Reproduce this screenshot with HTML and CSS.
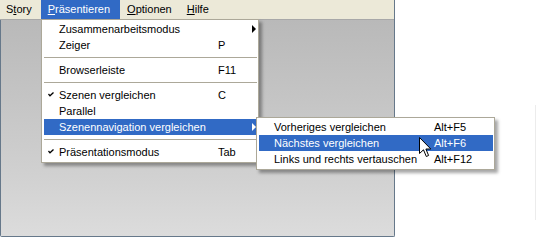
FILE: index.html
```html
<!DOCTYPE html>
<html lang="de">
  <head>
    <meta charset="UTF-8" />
    <title>Präsentieren</title>
    <link rel="stylesheet" href="styles.css">
  </head>
  <body>
    <div class="window">
      <div class="menubar">
        <span class="barItem first">S<u>t</u>ory</span>
        <span class="barItem open"><u>P</u>räsentieren</span>
        <span class="barItem"><u>O</u>ptionen</span>
        <span class="barItem"><u>H</u>ilfe</span>
      </div>
      <div class="canvas"></div>
    </div>
    <div class="edge"></div>

    <!-- main menu -->
    <div class="menu mainMenu">
      <div class="item"><span class="label">Zusammenarbeitsmodus</span><span class="arrow"></span></div>
      <div class="item"><span class="label">Zeiger</span><span class="key">P</span></div>
      <div class="sep"></div>
      <div class="item"><span class="label">Browserleiste</span><span class="key">F11</span></div>
      <div class="sep"></div>
      <div class="item"><span class="check"><svg width="6" height="5" viewBox="0 0 6 5"><path d="M0.5 2 L2 3.8 L5.5 0.5" fill="none" stroke="#000" stroke-width="1.3"/></svg></span><span class="label">Szenen vergleichen</span><span class="key">C</span></div>
      <div class="item"><span class="label">Parallel</span></div>
      <div class="item active"><span class="label">Szenennavigation vergleichen</span><span class="arrow"></span></div>
      <div class="sep"></div>
      <div class="item"><span class="check"><svg width="6" height="5" viewBox="0 0 6 5"><path d="M0.5 2 L2 3.8 L5.5 0.5" fill="none" stroke="#000" stroke-width="1.3"/></svg></span><span class="label">Präsentationsmodus</span><span class="key">Tab</span></div>
    </div>

    <!-- submenu -->
    <div class="menu subMenu">
      <div class="item"><span class="label">Vorheriges vergleichen</span><span class="key">Alt+F5</span></div>
      <div class="item active"><span class="label">Nächstes vergleichen</span><span class="key">Alt+F6</span></div>
      <div class="item"><span class="label">Links und rechts vertauschen</span><span class="key">Alt+F12</span></div>
    </div>

    <svg class="cursor" width="13" height="21" viewBox="0 0 13 21">
      <path d="M0.5 0.5 L0.5 16.5 L4.5 12.8 L7.3 19.5 L9.6 18.5 L6.9 12 L11.8 12 Z" fill="#fff" stroke="#000" stroke-width="1" stroke-linejoin="miter"/>
    </svg>
  </body>
</html>
```

FILE: styles.css
```css
body {
  margin: 0;
  background: #fff;
  font-family: "Liberation Sans", Arial, sans-serif;
  font-size: 11px;
  color: #000;
  display: flex;
  align-items: flex-start;
}
.window {
  width: 395px;
  height: 237px;
  box-sizing: border-box;
  border: 1px solid #66788a;
  border-top: none;
  border-radius: 0 0 2px 2px;
  display: flex;
  flex-direction: column;
}
.menubar {
  height: 19px;
  background: #ece9d8;
  border-bottom: 1px solid #a8a8a8;
  display: flex;
  margin-left: -1px;
}
.barItem {
  padding: 0 8px 0 7px;
  line-height: 19px;
}
.barItem.first {
  padding-left: 6px;
  margin-right: 1px;
}
.barItem.open {
  background: #316ac5;
  color: #fff;
  padding-right: 10px;
}
.canvas {
  flex: 1;
  background: linear-gradient(to bottom, #b9b9b9 0%, #c4c4c4 35%, #d0d0d0 70%, #dcdcdc 100%);
}
.edge {
  width: 1px;
  height: 115px;
  margin: 105px 0 0 140px;
  background: #ececec;
}

.menu {
  position: absolute;
  box-sizing: border-box;
  background: #fff;
  border: 1px solid #aca899;
  padding: 1px 1px 2px 2px;
  box-shadow: 3px 3px 3px rgba(0, 0, 0, 0.35);
}
.mainMenu {
  left: 41px;
  top: 19px;
  width: 218px;
}
.subMenu {
  left: 256px;
  top: 117px;
  width: 239px;
}
.item {
  position: relative;
  height: 16px;
  line-height: 16px;
  padding-left: 15px;
  display: flex;
  white-space: nowrap;
}
.mainMenu .label {
  width: 159px;
}
.subMenu .label {
  width: 160px;
}
.item.active {
  background: #316ac5;
  color: #fff;
}
.check {
  position: absolute;
  left: 4px;
  top: 5px;
  line-height: 0;
}
.arrow {
  position: absolute;
  right: 1px;
  top: 4px;
  width: 0;
  height: 0;
  border-top: 4px solid transparent;
  border-bottom: 4px solid transparent;
  border-left: 4px solid #000;
}
.item.active .arrow {
  border-left-color: #fff;
}
.sep {
  height: 9px;
  position: relative;
}
.sep::after {
  content: "";
  position: absolute;
  left: 0;
  right: 0;
  top: 4px;
  height: 1px;
  background: #aca899;
}
.cursor {
  position: absolute;
  left: 419px;
  top: 137px;
}
```
